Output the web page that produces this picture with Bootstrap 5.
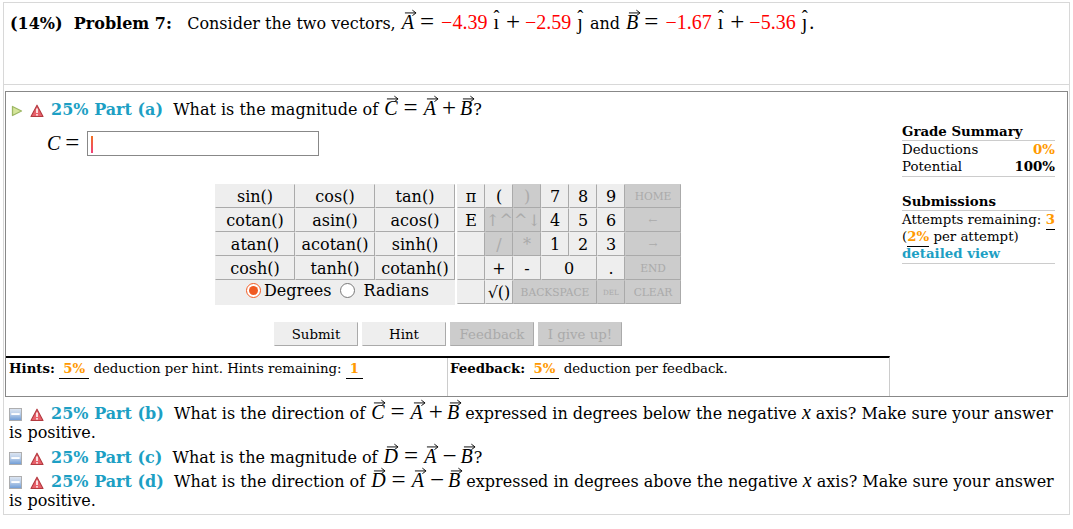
<!DOCTYPE html>
<html lang="en">
<head>
<meta charset="utf-8">
<title>Problem 7</title>
<link href="https://cdn.jsdelivr.net/npm/bootstrap@5.3.0/dist/css/bootstrap.min.css" rel="stylesheet">
<style>
body{font-family:"DejaVu Serif",serif;color:#000;background:#fff;font-size:16px;line-height:19px;}
.prob-outer{margin:2px 3px 0 3px;width:1067px;height:513px;border:1px solid #d8d8d8;}
.prob-head{height:82px;border-bottom:1px solid #d8d8d8;padding:10px 6px 0 6px;font-size:16px;white-space:nowrap;}
.part-box{margin:6px 1px 0 1px;height:306px;border:1px solid #888;}
.main-col{width:884px;}
.side-col{width:153px;margin-left:12px;padding-top:32px;font-size:13.33px;line-height:17px;}
.part-line{padding:7px 0 0 5px;height:38px;font-size:16px;white-space:nowrap;}
.part-tag{color:#1d9fc4;font-weight:700;}
.ans-row{height:25px;margin-top:1px;padding-left:41px;font-size:17px;}
.ans-lab{width:40px;}
.ans-wrap{position:relative;width:232px;height:25px;}
.ans-input{width:232px;height:25px;border:1px solid #888;border-radius:0;padding:0;background:#fff;display:block;}
.ans-caret{position:absolute;left:4px;top:5px;width:2px;height:17px;background:linear-gradient(#f07020,#f0407a);}
.calc{margin-top:28px;width:466px;height:121px;margin-left:209px;}
.calc-left{width:240px;display:grid;grid-template-columns:80px 80px 80px;grid-auto-rows:24px;background:#eee;}
.calc-right{width:224px;margin-left:2px;display:grid;grid-template-columns:repeat(6,28px) 56px;grid-auto-rows:24px;}
.ckey{background:#eee;border:1px solid #eee;border-right-color:#aaa;border-bottom-color:#aaa;border-radius:0;padding:0;font-size:16px;line-height:21px;color:#000;font-family:inherit;white-space:nowrap;overflow:hidden;text-align:center;}
.ckey.off{background:#ccc;color:#aaa;border-color:#ccc #aaa #aaa #ccc;}
.ckey.sm{font-size:10.67px;}
.ckey.xs{font-size:7.2px;}
.span2{grid-column:span 2;}
.span3{grid-column:span 3;}
.deg-row{grid-column:span 3;height:25px;line-height:20px;font-size:16px;padding:1px 0 0 31px;white-space:nowrap;}
.deg-row input{accent-color:#f05a22;width:15px;height:15px;margin:0 3px 0 0;vertical-align:-2px;}
.deg-row input + span + input{margin-left:4px;}
.btn-row{margin-top:17px;gap:4px;justify-content:center;}
.act{width:84px;height:24px;padding:1px 0 0;background:#eee;border:1px solid #eee;border-right-color:#aaa;border-bottom-color:#aaa;border-radius:0;font-size:13.33px;line-height:20px;color:#000;font-family:inherit;}
.act.off,.act.off:disabled{background:#ccc;border-color:#ccc #aaa #aaa #ccc;color:#aaa;opacity:1;}
.hint-row{margin-top:10px;height:40px;border-top:2px solid #000;border-right:1px solid #ccc;font-size:13.33px;line-height:17px;}
.hint-a{width:442px;padding:2px 3px;border-right:1px solid #ccc;}
.hint-b{padding:2px 2px;}
.pct{color:#f90;font-weight:700;border-bottom:1px solid #000;padding:0 4px 2px 4px;}
.pct-t{color:#f90;font-weight:700;border-bottom:1px solid #000;padding-bottom:2px;}
.side-h{font-weight:700;border-bottom:1px solid #ccc;line-height:15px;padding-bottom:1px;}
.side-row{height:17px;}
.side-end{border-bottom:1px solid #ccc;padding-bottom:1px;margin-bottom:17px;}
.amber{color:#f90;font-weight:700;}
.side-link{color:#1d9fc4;font-weight:700;}
.sub-part{padding:6px 0 0 5px;font-size:16px;line-height:19px;}
.sub-part.mid{padding-top:5px;}
.sub-part.last{padding-top:4px;}
.sub-part .ico{margin-right:8px;}
.m{font-family:"Liberation Serif",serif;font-size:20px;}
.op{font-size:25px;line-height:0;margin:0 5px;vertical-align:-1px;}
.op.wide{margin-right:7px;}
.op.pl{margin-right:3px;}
.red{color:#f00;}
.vec{position:relative;font-style:italic;padding:0 1px;}
.vec svg{position:absolute;left:3px;top:-3px;width:13px;height:8px;}
.hat{position:relative;margin:0 2px 0 6px;}
.hat::before{content:"ˆ";position:absolute;left:0;right:0;top:-3px;text-align:center;font-size:18px;}
.ico{vertical-align:-2px;margin-right:7px;}
.ico-w{margin-right:2px;vertical-align:-3px;}
</style>
</head>
<body>
<svg width="0" height="0" class="d-block position-absolute"><defs>
<symbol id="arr" viewBox="0 0 14 8"><path d="M1 5h11" stroke="#000" stroke-width="1" fill="none"/><path d="M9 2l4 3-4 3" stroke="#000" stroke-width="1" fill="none"/></symbol>
<symbol id="warn" viewBox="0 0 14 14"><path d="M7 1.2L13 12.5H1z" fill="#e8606a" stroke="#b23a40" stroke-width="1.1" stroke-linejoin="round"/><path d="M7 4.5v4.5" stroke="#fff" stroke-width="1.6"/><circle cx="7" cy="10.8" r=".9" fill="#fff"/></symbol>
<symbol id="minus" viewBox="0 0 14 14"><defs><linearGradient id="gb" x1="0" y1="0" x2="0" y2="1"><stop offset="0" stop-color="#dfe7f2"/><stop offset=".5" stop-color="#b5cbe8"/><stop offset="1" stop-color="#6b9ad6"/></linearGradient></defs><rect x=".5" y=".5" width="13" height="13" fill="url(#gb)" stroke="#a9a9a9"/><rect x="2.5" y="5.5" width="9" height="2" fill="#fff"/></symbol>
<symbol id="play" viewBox="0 0 12 12"><path d="M1.5 1.5L10.5 6 1.5 10.5z" fill="#d5e59a" stroke="#9db765" stroke-width="1.3" stroke-linejoin="round"/></symbol>
</defs></svg>

<div class="prob-outer">
  <div class="prob-head"><b>(14%)&nbsp; Problem 7:</b>&nbsp;&nbsp; Consider the two vectors, <span class="m"><span class="vec">A<svg><use href="#arr"/></svg></span><span class="op wide">=</span><span class="red">−4.39</span><span class="hat">ı</span><span class="op">+</span><span class="red">−2.59</span><span class="hat">ȷ</span> </span>and <span class="m"><span class="vec">B<svg><use href="#arr"/></svg></span><span class="op wide">=</span><span class="red">−1.67</span><span class="hat">ı</span><span class="op">+</span><span class="red">−5.36</span><span class="hat">ȷ</span>.</span></div>

  <div class="part-box d-flex">
    <div class="main-col d-flex flex-column">
      <div class="part-line"><svg class="ico" width="12" height="12"><use href="#play"/></svg><svg class="ico-w" width="14" height="14"><use href="#warn"/></svg> <span class="part-tag">25% Part (a)</span>&nbsp; What is the magnitude of <span class="m"><span class="vec">C<svg><use href="#arr"/></svg></span><span class="op">=</span><span class="vec">A<svg><use href="#arr"/></svg></span><span class="op pl">+</span><span class="vec">B<svg><use href="#arr"/></svg></span></span>?</div>
      <div class="ans-row d-flex align-items-center">
        <span class="ans-lab m"><i>C</i><span class="op">=</span></span>
        <div class="ans-wrap"><input class="ans-input" type="text" aria-label="C"><span class="ans-caret"></span></div>
      </div>
      <div class="calc d-flex">
        <div class="calc-left">
          <button class="ckey">sin()</button><button class="ckey">cos()</button><button class="ckey">tan()</button>
          <button class="ckey">cotan()</button><button class="ckey">asin()</button><button class="ckey">acos()</button>
          <button class="ckey">atan()</button><button class="ckey">acotan()</button><button class="ckey">sinh()</button>
          <button class="ckey">cosh()</button><button class="ckey">tanh()</button><button class="ckey">cotanh()</button>
          <div class="deg-row"><input type="radio" name="u" checked aria-label="Degrees"><span>Degrees</span> <input type="radio" name="u" aria-label="Radians"> Radians</div>
        </div>
        <div class="calc-right">
          <button class="ckey">π</button><button class="ckey">(</button><button class="ckey off">)</button><button class="ckey">7</button><button class="ckey">8</button><button class="ckey">9</button><button class="ckey off sm">HOME</button>
          <button class="ckey">E</button><button class="ckey off">↑^</button><button class="ckey off">^↓</button><button class="ckey">4</button><button class="ckey">5</button><button class="ckey">6</button><button class="ckey off sm">←</button>
          <button class="ckey"></button><button class="ckey off">/</button><button class="ckey off">*</button><button class="ckey">1</button><button class="ckey">2</button><button class="ckey">3</button><button class="ckey off sm">→</button>
          <button class="ckey"></button><button class="ckey">+</button><button class="ckey">-</button><button class="ckey span2">0</button><button class="ckey">.</button><button class="ckey off sm">END</button>
          <button class="ckey"></button><button class="ckey">√()</button><button class="ckey off sm span3">BACKSPACE</button><button class="ckey off xs">DEL</button><button class="ckey off sm">CLEAR</button>
        </div>
      </div>
      <div class="btn-row d-flex">
        <button class="btn act">Submit</button><button class="btn act">Hint</button><button class="btn act off" disabled>Feedback</button><button class="btn act off" disabled>I give up!</button>
      </div>
      <div class="hint-row d-flex">
        <div class="hint-a"><b>Hints:</b> <span class="pct">5%</span> deduction per hint. Hints remaining: <span class="pct">1</span></div>
        <div class="hint-b"><b>Feedback:</b> <span class="pct">5%</span> deduction per feedback.</div>
      </div>
    </div>
    <div class="side-col">
      <div class="side-h">Grade Summary</div>
      <div class="d-flex justify-content-between"><span>Deductions</span><span class="amber">0%</span></div>
      <div class="d-flex justify-content-between side-end"><span>Potential</span><b>100%</b></div>
      <div class="side-h">Submissions</div>
      <div class="d-flex justify-content-between side-row"><span>Attempts remaining:</span><span><span class="pct-t">3</span></span></div>
      <div class="side-row">(<span class="pct-t">2%</span> per attempt)</div>
      <div class="side-end"><span class="side-link">detailed view</span></div>
    </div>
  </div>

  <div class="sub-part"><svg class="ico" width="13" height="13"><use href="#minus"/></svg><svg class="ico-w" width="14" height="14"><use href="#warn"/></svg> <span class="part-tag">25% Part (b)</span>&nbsp; What is the direction of <span class="m"><span class="vec">C<svg><use href="#arr"/></svg></span><span class="op">=</span><span class="vec">A<svg><use href="#arr"/></svg></span><span class="op pl">+</span><span class="vec">B<svg><use href="#arr"/></svg></span></span> expressed in degrees below the negative <i class="m">x</i> axis? Make sure your answer is positive.</div>
  <div class="sub-part mid"><svg class="ico" width="13" height="13"><use href="#minus"/></svg><svg class="ico-w" width="14" height="14"><use href="#warn"/></svg> <span class="part-tag">25% Part (c)</span>&nbsp; What is the magnitude of <span class="m"><span class="vec">D<svg><use href="#arr"/></svg></span><span class="op">=</span><span class="vec">A<svg><use href="#arr"/></svg></span><span class="op pl">−</span><span class="vec">B<svg><use href="#arr"/></svg></span></span>?</div>
  <div class="sub-part last"><svg class="ico" width="13" height="13"><use href="#minus"/></svg><svg class="ico-w" width="14" height="14"><use href="#warn"/></svg> <span class="part-tag">25% Part (d)</span>&nbsp; What is the direction of <span class="m"><span class="vec">D<svg><use href="#arr"/></svg></span><span class="op">=</span><span class="vec">A<svg><use href="#arr"/></svg></span><span class="op pl">−</span><span class="vec">B<svg><use href="#arr"/></svg></span></span> expressed in degrees above the negative <i class="m">x</i> axis? Make sure your answer is positive.</div>
</div>
<script src="https://cdn.jsdelivr.net/npm/bootstrap@5.3.0/dist/js/bootstrap.bundle.min.js"></script>
</body>
</html>
